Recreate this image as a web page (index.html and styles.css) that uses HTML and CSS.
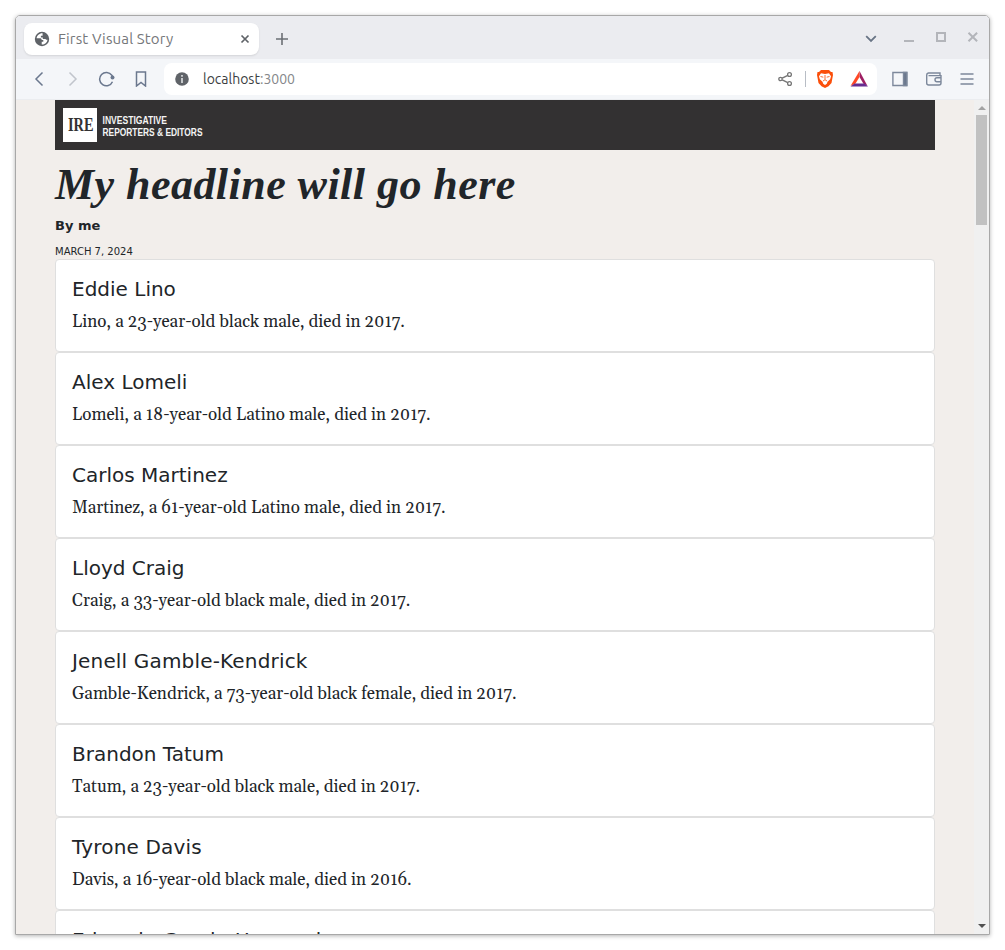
FILE: index.html
```html
<!DOCTYPE html>
<html lang="en">
<head>
<meta charset="utf-8">
<title>First Visual Story</title>
<link rel="stylesheet" href="styles.css">
</head>
<body>
<div class="window">
  <div class="tabstrip">
    <div class="tab">
      <svg class="globe" width="16" height="16" viewBox="0 0 16 16"><circle cx="8" cy="8" r="7.200" fill="#5f6368"/><path d="M8.600 2.300C5.400 2.100 3 4.500 2.600 7.300h3.200c1.400 0 1.900.6 1.900 1.700h1.600v1.700H7.700v2.900c2.900.2 5.400-2 5.800-4.900-.9.300-1.600 0-2-.8H8.800V6.400H6.900V4.800h1.700z" fill="#fff"/></svg>
      <span class="tab-title">First Visual Story</span>
      <svg class="tab-close" width="10" height="10" viewBox="0 0 10 10"><path d="M1.500 1.500l7 7m0-7l-7 7" stroke="#5f6368" stroke-width="1.700"/></svg>
    </div>
    <svg class="newtab" width="14" height="14" viewBox="0 0 14 14"><path d="M7 1v12M1 7h12" stroke="#6b6f74" stroke-width="1.600"/></svg>
    <svg class="controls" width="114" height="14" viewBox="0 0 114 14"><path d="M1.200 6.200L6 11l4.800-4.800" fill="none" stroke="#687485" stroke-width="1.800"/><path d="M39 11h10" stroke="#b3b5ba" stroke-width="2"/><path d="M72 3h8v8h-8z" fill="none" stroke="#b3b5ba" stroke-width="2"/><path d="M103.500 2.700l8.600 8.600m0-8.600l-8.600 8.600" stroke="#b3b5ba" stroke-width="2"/></svg>
  </div>
  <div class="toolbar">
    <svg class="nav" width="114" height="16" viewBox="0 0 114 16" fill="none" stroke="#6b788e" stroke-width="1.500"><path d="M8.500 1.500L2 8l6.500 6.500"/><path d="M35.500 1.500L42 8 35.500 14.500" stroke="#c1c5cc"/><path d="M78.500 10.800A6.700 6.700 0 1 1 77.800 4.200L79 6"/><circle cx="78.500" cy="6.500" r="2" fill="#6b788e" stroke="none"/><path d="M102.500 1h9v14l-4.500-3.500-4.500 3.500z"/></svg>
    <div class="address">
      <svg class="info" width="14" height="14" viewBox="0 0 14 14"><circle cx="7" cy="7" r="6.800" fill="#5f6368"/><path d="M7 3v1.800M7 6v5" stroke="#d9dbdd" stroke-width="1.700"/></svg>
      <span class="url">localhost<span class="port">:3000</span></span>
      <svg class="share" width="92" height="20" viewBox="0 0 92 20"><g fill="none" stroke="#757575" stroke-width="1.300"><circle cx="2.500" cy="10" r="1.700"/><circle cx="11.500" cy="5.500" r="1.900"/><circle cx="11.500" cy="14.500" r="1.900"/><path d="M4.200 9.100l5.600-2.800m-5.600 4.600l5.600 2.800"/></g><path d="M27.500 2v16" stroke="#b8bdc5"/><path d="M43 1h8l2 2h1.500l.5 3-1.500 8-3 3.200L47 19l-3.500-1.800-3-3.200L39 6l.5-3H41z" fill="#fb4f0a"/><path d="M43 4.200l4 .8 4-.8 2 3-.8 3-2.700 2.500-.7 2L47 16l-1.800-1.300-.7-2-2.700-2.500-.8-3z" fill="#fff"/><path d="M42.500 7.500l2.800.7M51.500 7.500l-2.800.7M47 6v4.500M45 12l2-1.300 2 1.300" fill="none" stroke="#fb6d35" stroke-width="1"/><path d="M81.500 2L89.500 17l-4-2.200-4-6.800z" fill="#9e1f63"/><path d="M81.500 2v6L77.500 14.500 72.500 17z" fill="#ff4724"/><path d="M72.500 17.500L76.500 14.600h10L90 17.500z" fill="#662d91"/></svg>
    </div>
    <svg class="tools" width="82" height="16" viewBox="0 0 82 16" fill="none" stroke="#7c889b" stroke-width="1.400"><path d="M.9 1.500h13.900v13H.9z"/><path d="M11.500 1.500h3.300v13h-3.300z" fill="#6b788e"/><path d="M48 4.500V2H36.500a2 2 0 0 0-1.800 2v8q0 2 2 2H47q2 0 2-2V4.600H36.500"/><path d="M49 6.800h-4q-2 0-2 2t2 2h4"/><path d="M68.500 3h13M68.500 8h13M68.500 13h13"/></svg>
  </div>
  <div class="viewport">
    <main class="page">
      <header class="brand">
        <svg width="150" height="34" viewBox="0 0 150 34"><path d="M0 0h34v34H0z" fill="#fff"/><text class="ire" x="5" y="22.700" textLength="25.500" lengthAdjust="spacingAndGlyphs">IRE</text><text class="org" x="39.500" y="16" textLength="64.500" lengthAdjust="spacingAndGlyphs">INVESTIGATIVE</text><text class="org" x="39.500" y="28" textLength="100" lengthAdjust="spacingAndGlyphs">REPORTERS &amp; EDITORS</text></svg>
      </header>
      <h1 class="headline">My headline will go here</h1>
      <div class="byline">By me</div>
      <div class="date">MARCH 7, 2024</div>
      <section class="cards">
        <article class="card"><h2>Eddie Lino</h2><p>Lino, a 23-year-old black male, died in 2017.</p></article>
        <article class="card"><h2>Alex Lomeli</h2><p>Lomeli, a 18-year-old Latino male, died in 2017.</p></article>
        <article class="card"><h2>Carlos Martinez</h2><p>Martinez, a 61-year-old Latino male, died in 2017.</p></article>
        <article class="card"><h2>Lloyd Craig</h2><p>Craig, a 33-year-old black male, died in 2017.</p></article>
        <article class="card"><h2 class="loose">Jenell Gamble-Kendrick</h2><p>Gamble-Kendrick, a 73-year-old black female, died in 2017.</p></article>
        <article class="card"><h2>Brandon Tatum</h2><p>Tatum, a 23-year-old black male, died in 2017.</p></article>
        <article class="card"><h2 class="loose">Tyrone Davis</h2><p>Davis, a 16-year-old black male, died in 2016.</p></article>
        <article class="card"><h2 class="loose">Eduardo Garcia Hernandez</h2></article>
      </section>
    </main>
    <div class="scrollbar">
      <svg width="8" height="4" viewBox="0 0 8 4"><path d="M4 0l4 4H0z" fill="#a3a3a3"/></svg>
      <div class="thumb"></div>
      <svg class="down" width="8" height="4" viewBox="0 0 8 4"><path d="M0 0h8L4 4z" fill="#505050"/></svg>
    </div>
  </div>
</div>
</body>
</html>
```
FILE: styles.css
```css
* { box-sizing: border-box; }
body { margin: 0; padding: 15px; background: #fff; height: 950px; overflow: hidden; }
svg { display: block; flex: none; }
.window { width: 975px; height: 920px; border: 1px solid #a8a8a8; border-radius: 5px 5px 0 0; overflow: hidden; box-shadow: 0 1px 4px rgba(0,0,0,.3); display: flex; flex-direction: column; }
.tabstrip { height: 43px; flex: none; background: #ebecf0; display: flex; padding-left: 8px; }
.tab { width: 235px; height: 32px; margin-top: 7px; background: #fff; border-radius: 8px; box-shadow: 0 1px 2px rgba(0,0,0,.1); display: flex; align-items: center; padding: 0 9px 0 10px; }
.tab-title { font: 15px/20px Ubuntu, "Open Sans", sans-serif; color: #75777a; margin-left: 8px; letter-spacing: .15px; white-space: nowrap; }
.tab-close { margin-left: auto; }
.newtab { margin: 16px 0 0 16px; }
.controls { margin: 14px 10px 0 auto; }
.toolbar { height: 41px; flex: none; background: #f4f6f9; border-bottom: 1px solid #ebedf0; display: flex; align-items: center; padding: 0 15px 0 18px; }
.address { width: 713px; height: 32px; margin-left: 16px; background: #fff; border-radius: 8px; display: flex; align-items: center; padding: 0 7px 0 11px; }
.url { margin-left: 14px; font: 14px/20px Ubuntu, "Open Sans", sans-serif; color: #3c3e42; white-space: nowrap; }
.port { color: #85878a; }
.share { margin-left: auto; }
.tools { margin-left: auto; }
.viewport { flex: 1; min-height: 0; background: #f2eeeb; display: flex; padding-left: 39px; }
.page { width: 880px; color: #212529; }
.brand { height: 50px; background: #333132; padding: 8px; }
.ire { font: bold 19.500px "Liberation Serif", serif; fill: #333132; }
.org { font: bold 11.500px "Liberation Sans", sans-serif; fill: #f4f4f4; }
.headline { margin: 8px 0 0; font: italic bold 44px/53px "Liberation Serif", serif; letter-spacing: .46px; white-space: nowrap; }
.byline { margin-top: 6px; font: bold 13px/18px "DejaVu Sans", sans-serif; }
.date { margin-top: 10px; height: 14px; font: 10px/14px "DejaVu Sans", sans-serif; }
.card { height: 93px; background: #fff; border: 1px solid #dfdfdf; border-radius: 4px; padding: 17px 16px 16px; }
.card h2 { margin: 0; font: 20px/24px "DejaVu Sans", sans-serif; }
.card h2.loose { letter-spacing: .17px; }
.card p { margin: 9px 0 0; font: 17px/24px Georgia, Gelasio, "Liberation Serif", serif; white-space: nowrap; }
.scrollbar { width: 15px; margin-left: auto; background: #f0f0f0; display: flex; flex-direction: column; align-items: center; padding: 6px 0; }
.thumb { width: 11px; height: 110px; margin-top: 5px; background: #c1c1c1; }
.down { margin-top: auto; }
```
